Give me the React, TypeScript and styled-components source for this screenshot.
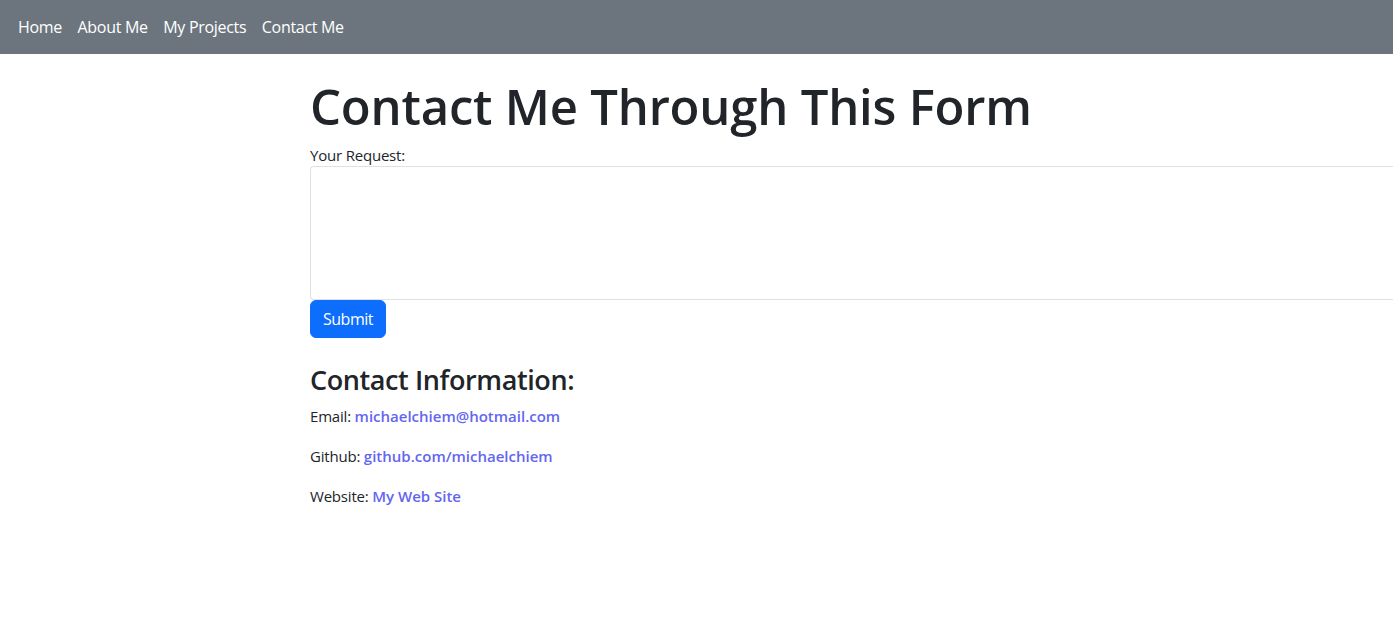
import React from "react";
import styled, { createGlobalStyle } from "styled-components";

const Global = createGlobalStyle`
  html, body { margin: 0; padding: 0; overflow: hidden; }
  body {
    font-family: "Open Sans", "Noto Sans", sans-serif;
    font-size: 16px;
    line-height: 1.5;
    color: #212529;
    background: #fff;
  }
  * { box-sizing: border-box; }
`;

const Navbar = styled.nav`
  display: flex;
  align-items: center;
  gap: 15.5px;
  height: 54px;
  padding: 0 18px;
  background: #6c757d;
`;

const NavLink = styled.a`
  color: #fff;
  text-decoration: none;
  font-size: 16px;
  letter-spacing: -0.3px;
`;

const Main = styled.main`
  display: flex;
  flex-direction: column;
  align-items: flex-start;
  padding-left: 310px;
  padding-top: 23px;
  width: 1600px;
`;

const Title = styled.h1`
  margin: 0 0 8px;
  font-size: 49px;
  font-weight: 600;
  line-height: 1.2;
  letter-spacing: -0.2px;
`;

const Label = styled.label`
  display: block;
  font-size: 15px;
  line-height: 22px;
  letter-spacing: -0.2px;
`;

const TextArea = styled.textarea`
  display: block;
  width: 1200px;
  height: 134px;
  border: 1px solid #dee2e6;
  border-right: none;
  border-radius: 4px 0 0 4px;
  resize: none;
  margin: 0;
  outline: none;
`;

const SubmitButton = styled.button`
  font-family: inherit;
  font-size: 16px;
  line-height: 24px;
  padding: 6px 12px;
  color: #fff;
  background: #0d6efd;
  border: 1px solid #0d6efd;
  border-radius: 6px;
  letter-spacing: -0.5px;
  cursor: pointer;
`;

const SubTitle = styled.h3`
  margin: 26px 0 8px;
  font-size: 27px;
  font-weight: 600;
  line-height: 1.2;
  letter-spacing: -0.4px;
`;

const InfoLine = styled.p`
  margin: 0 0 16px;
  font-size: 15px;
  line-height: 24px;
  letter-spacing: -0.2px;
`;

const InfoLink = styled.a`
  color: #6366f1;
  font-weight: 600;
  letter-spacing: 0;
  text-decoration: none;
`;

export default function App() {
  return (
    <>
      <Global />
      <Navbar>
        <NavLink href="#">Home</NavLink>
        <NavLink href="#">About Me</NavLink>
        <NavLink href="#">My Projects</NavLink>
        <NavLink href="#">Contact Me</NavLink>
      </Navbar>
      <Main>
        <Title>Contact Me Through This Form</Title>
        <Label htmlFor="req">Your Request:</Label>
        <TextArea id="req" />
        <SubmitButton type="button">Submit</SubmitButton>
        <SubTitle>Contact Information:</SubTitle>
        <InfoLine>
          Email: <InfoLink href="#">michaelchiem@hotmail.com</InfoLink>
        </InfoLine>
        <InfoLine>
          Github: <InfoLink href="#">github.com/michaelchiem</InfoLink>
        </InfoLine>
        <InfoLine>
          Website: <InfoLink href="#">My Web Site</InfoLink>
        </InfoLine>
      </Main>
    </>
  );
}
